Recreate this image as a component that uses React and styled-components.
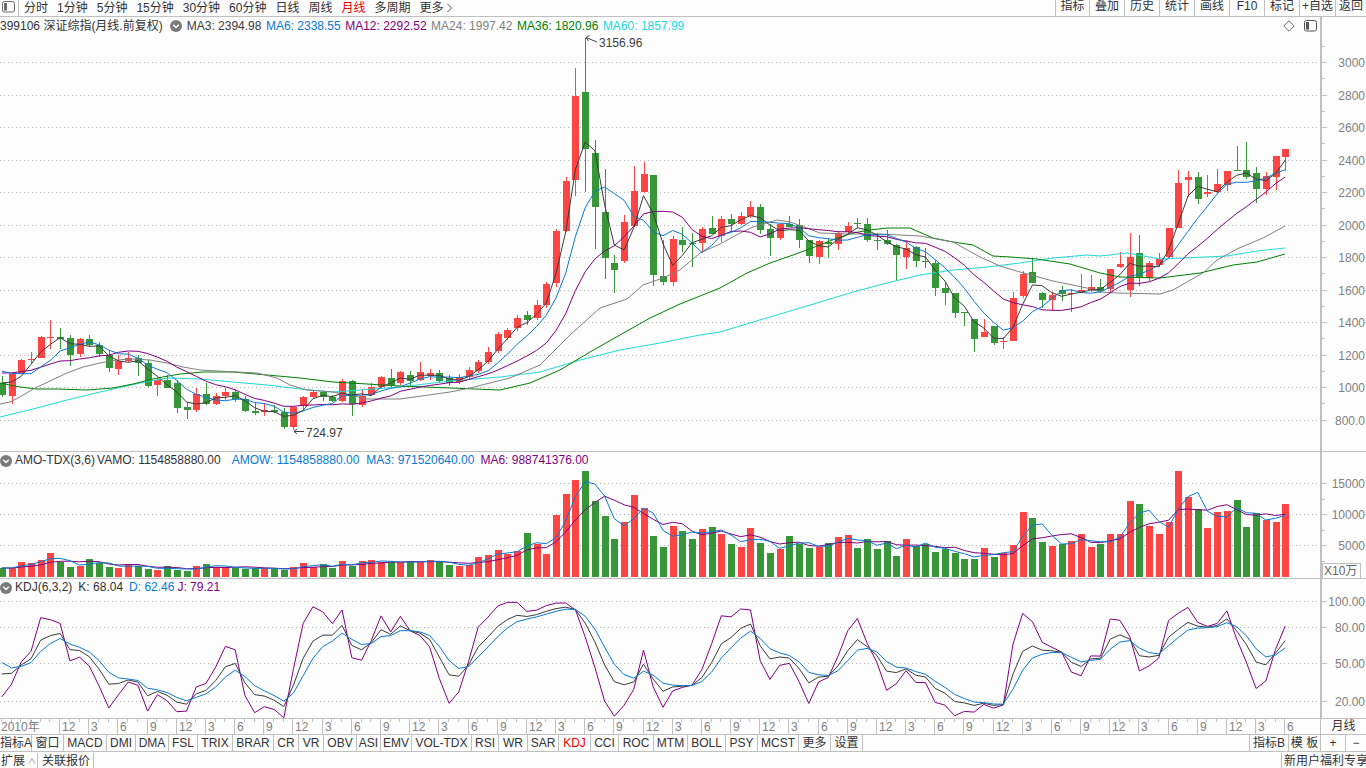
import React from 'react';
import styled, { createGlobalStyle } from 'styled-components';

const LINE = '#c0c0c0';
const INK = '#333333';
const RED = '#ff4444';
const GREEN = '#379637';
const MA = { ma3: '#3a3a3a', ma6: '#0a78d2', ma12: '#800080', ma24: '#808080', ma36: '#008000', ma60: '#20d8d8' };

const Global = createGlobalStyle`
  html, body { margin: 0; padding: 0; background: #fdfdfd; overflow: hidden; }
  body { font: 12px "Liberation Sans", "Noto Sans CJK SC", sans-serif; color: ${INK}; }
`;

const Page = styled.div`
  width: 1366px;
  height: 768px;
  display: flex;
  flex-direction: column;
  background: #fdfdfd;
  overflow: hidden;
`;

const Toolbar = styled.div`
  height: 16px;
  flex: none;
  display: flex;
  border-bottom: 1px solid ${LINE};
  line-height: 13px;
`;

const LayoutButton = styled.div`
  width: 19px;
  border-right: 1px solid ${LINE};
  padding: 1px 0 0 2px;
  box-sizing: border-box;
`;

const Periods = styled.div`
  display: flex;
  gap: 9px;
  padding-left: 5px;
`;

const Period = styled.span`
  display: flex;
  align-items: center;
  gap: 2px;
  white-space: nowrap;
  color: ${p => (p.$active ? '#f00000' : INK)};
`;

const ToolRight = styled.div`
  margin-left: auto;
  display: flex;
`;

const ToolButton = styled.div`
  width: ${p => p.$w}px;
  box-sizing: border-box;
  border-left: 1px solid ${LINE};
  text-align: center;
  white-space: nowrap;
  overflow: hidden;
`;

const Pane = styled.section`
  position: relative;
  flex: none;
  border-bottom: 1px solid ${LINE};
`;

const Legend = styled.div`
  width: 1320px;
  height: ${p => p.$h}px;
  line-height: ${p => p.$h}px;
  box-sizing: content-box;
  display: flex;
  align-items: center;
  gap: ${p => p.$gap}px;
  border-right: 2px solid ${LINE};
  white-space: nowrap;
`;

const Reading = styled.span`
  color: ${p => p.$color};
  margin-left: ${p => p.$before || 0}px;
  margin-right: ${p => p.$after || 0}px;
`;

const LegendTools = styled.div`
  margin-left: auto;
  display: flex;
  align-items: center;
  gap: 9px;
  padding-right: 3px;
`;

const Plot = styled.svg`
  display: block;
  font: 12px "Liberation Sans", "Noto Sans CJK SC", sans-serif;
`;

const UnitBadge = styled.div`
  position: absolute;
  left: 1322px;
  bottom: 0;
  width: 36px;
  height: 14px;
  line-height: 14px;
  padding-left: 1px;
  border: 1px solid ${LINE};
  border-bottom: 0;
  color: #666;
  white-space: nowrap;
`;

const AxisRow = styled.div`
  height: 15px;
  flex: none;
  display: flex;
  border-bottom: 1px solid ${LINE};
`;

const AxisUnit = styled.div`
  flex: 1;
  border-left: 1px solid ${LINE};
  text-align: center;
  line-height: 14px;
`;

const TabStrip = styled.div`
  height: 16px;
  flex: none;
  display: flex;
  line-height: 16px;
  border-bottom: 1px solid ${LINE};
`;

const Tab = styled.div`
  width: ${p => p.$w}px;
  box-sizing: border-box;
  border-right: 1px solid ${LINE};
  text-align: center;
  white-space: nowrap;
  color: ${p => (p.$active ? '#f00000' : INK)};
`;

const TabsRight = styled.div`
  margin-left: auto;
  display: flex;
`;

const SideTab = styled(Tab)`
  border-right: 0;
  border-left: 1px solid ${LINE};
`;

const StatusBar = styled.div`
  flex: 1;
  display: flex;
  line-height: 16px;
  padding-top: 1px;
  overflow: hidden;
`;

const StatusCell = styled.div`
  width: ${p => p.$w}px;
  box-sizing: border-box;
  display: flex;
  align-items: center;
  gap: 3px;
  padding-left: ${p => p.$pad}px;
  border-right: 1px solid ${LINE};
  white-space: nowrap;
`;

const Promo = styled.div`
  margin-left: auto;
  width: 82px;
  padding-left: 2px;
  border-left: 1px solid ${LINE};
  white-space: nowrap;
  overflow: hidden;
`;

/* Monthly candles in plot coordinates: body top, body bottom, high, low, up (1) or down (0). */
const CANDLES = [
  [383,395,376,397,0],[374,396,374,404,1],[360,373,359,374,1],[359,360,352,364,1],[337,358,336,358,1],
  [337,338,320,349,1],[337,339,328,349,0],[338,355,335,366,0],[339,354,338,357,1],[339,345,335,347,0],
  [345,354,342,357,0],[355,368,350,372,0],[361,369,355,375,1],[358,361,352,362,1],[358,363,355,376,0],
  [363,386,360,387,0],[380,385,378,396,1],[380,388,375,388,0],[383,408,380,413,0],[407,410,402,419,0],
  [394,410,388,412,1],[394,404,383,405,0],[396,404,393,405,1],[392,396,388,400,1],[392,399,390,402,0],
  [399,411,396,412,0],[411,413,402,415,0],[410,412,403,416,1],[410,412,405,413,0],[412,427,408,429,0],
  [407,427,406,430,1],[397,406,396,410,1],[392,397,390,398,1],[392,397,391,401,0],[397,401,395,402,0],
  [381,401,379,402,1],[381,404,380,416,0],[396,405,389,407,1],[387,395,383,396,1],[377,387,376,389,1],
  [378,385,369,388,0],[372,383,371,385,1],[375,381,371,385,0],[372,380,362,381,1],[373,376,369,380,1],
  [373,381,370,383,0],[378,383,375,386,0],[377,382,374,384,1],[370,377,367,380,1],[362,371,360,373,1],
  [352,362,347,364,1],[334,351,332,353,1],[330,338,328,340,1],[318,328,315,331,1],[315,320,311,325,0],
  [305,318,300,320,1],[284,305,282,308,1],[231,283,229,287,1],[181,231,177,232,1],[96,180,68,196,1],
  [92,149,38,192,0],[153,207,140,249,0],[212,258,169,279,0],[263,270,255,293,0],[222,261,215,263,1],
  [191,226,166,227,1],[174,192,162,193,1],[175,275,175,286,0],[276,282,240,285,0],[239,282,236,286,1],
  [240,245,227,252,0],[243,244,233,267,0],[229,243,227,253,1],[228,234,216,234,0],[219,236,216,242,1],
  [219,224,214,232,0],[216,224,212,225,1],[207,216,201,218,1],[207,230,204,234,0],[229,238,224,256,0],
  [224,238,223,240,1],[224,227,216,227,0],[225,240,219,248,0],[240,256,240,263,0],[241,257,240,264,1],
  [242,244,238,258,0],[233,244,232,250,1],[226,232,222,233,1],[223,224,218,228,0],[224,240,218,242,0],
  [240,241,233,250,0],[240,244,230,245,0],[245,255,244,280,0],[248,257,240,269,1],[247,261,246,267,0],
  [261,262,248,268,0],[263,288,260,296,0],[288,293,283,305,0],[293,313,293,318,0],[312,313,312,326,0],
  [319,339,319,352,0],[332,337,319,337,1],[326,343,326,345,0],[341,342,337,349,1],[298,341,292,341,1],
  [274,296,271,298,1],[272,283,258,283,0],[293,300,292,308,0],[295,300,292,311,1],[290,294,286,301,0],
  [293,294,289,312,1],[290,292,274,293,1],[287,290,275,292,1],[287,291,279,293,0],[269,289,269,293,1],
  [264,267,252,268,1],[257,290,233,297,1],[253,278,235,286,0],[263,278,261,281,1],[259,265,253,267,1],
  [228,257,228,258,1],[183,228,170,228,1],[177,180,171,197,1],[177,199,172,204,0],[192,194,175,197,1],
  [184,192,169,193,1],[171,185,171,191,1],[170,171,146,171,0],[170,177,142,179,0],[173,189,167,203,0],
  [176,189,172,195,1],[156,177,156,190,1],[149,157,149,171,1],
];

/* Top edge of each turnover bar. */
const VOLUME = [
  568,568,562,563,560,553,562,567,566,559,563,567,568,564,566,569,570,566,570,571,566,564,567,567,568,569,
  568,568,569,570,567,563,567,564,568,561,566,561,560,562,562,562,562,562,560,562,565,566,565,557,555,550,
  554,551,533,544,554,515,494,480,471,501,516,539,522,495,508,536,
  547,526,531,539,529,527,534,544,547,528,543,553,549,536,544,548,547,543,537,535,548,539,549,541,556,539,
  546,544,552,549,553,559,559,548,557,553,545,512,518,542,546,544,541,534,547,544,534,534,501,504,526,534,
  522,471,497,509,528,512,511,500,527,513,520,522,504,
];

const barX = i => 1.8 + 9.723 * i;
const closeOf = c => (c[4] ? c[0] : c[1]);

const movingAverage = (series, n, earlier = []) => {
  const all = [...earlier, ...series];
  return series.map((_, i) => {
    const end = i + earlier.length + 1;
    const win = all.slice(Math.max(0, end - n), end);
    return win.reduce((a, b) => a + b, 0) / win.length;
  });
};

const closes = CANDLES.map(closeOf);
const CLOSE_HISTORY = [375, 375, 375, 375, 375, 375, 359, 359, 359, 377, 377];
const toLine = values => values.map((y, i) => `${barX(i).toFixed(1)},${y.toFixed(1)}`).join(' ');
const ptsLine = pts => pts.map(p => p.join(',')).join(' ');

/* Long averages need more history than the plot shows, so they are stored as traced curves. */
const MA24_PTS = [[0,404],[10,402],[20,397],[33,389],[50,381],[67,373],[83,367],[100,363],[117,360],[133,359],[150,360],[167,363],[183,367],[200,370],[217,371],[237,372],[257,373],[277,378],[290,385],[307,390],[333,392],[350,395],[367,399],[400,399],[450,392],[470,388],[510,378],[540,365],[570,335],[600,308],[627,299],[643,285],[663,278],[680,270],[700,253],[720,244],[740,233],[753,227],[777,220],[790,222],[807,228],[820,233],[847,234],[880,234],[920,236],[953,242],[980,257],[1000,266],[1020,272],[1053,281],[1087,288],[1100,292],[1117,293],[1160,294],[1173,290],[1187,282],[1203,273],[1217,260],[1237,249],[1263,238],[1285,226]];
const MA36_PTS = [[0,383],[20,387],[37,389],[57,389],[87,390],[113,388],[133,384],[157,378],[180,374],[203,372],[233,372],[267,375],[300,378],[333,382],[367,384],[400,386],[450,388],[500,390],[530,383],[560,370],[590,352],[620,335],[650,318],[680,304],[720,288],[747,273],[770,263],[793,255],[820,245],[837,238],[853,233],[870,230],[887,228],[910,228],[933,238],[953,242],[973,245],[993,256],[1010,257],[1037,259],[1070,264],[1100,273],[1120,277],[1160,278],[1200,273],[1233,265],[1257,262],[1285,254]];
const MA60_PTS = [[0,417],[33,409],[67,400],[100,392],[140,383],[167,378],[200,379],[233,382],[267,385],[300,389],[333,392],[400,387],[450,381],[500,377],[540,372],[580,360],[620,350],[660,343],[700,335],[720,332],[753,322],[787,312],[820,302],[853,292],[887,283],[920,275],[953,270],[987,267],[1020,263],[1053,258],[1087,255],[1100,256],[1127,253],[1160,259],[1183,258],[1227,256],[1257,251],[1285,248]];

/* KDJ(6,3,2) taken from the candles; the first bars also see the range of the months before them. */
const kdjSeries = () => {
  let k = 55;
  let d = 60;
  const K = [], D = [], J = [];
  CANDLES.forEach((c, i) => {
    const win = CANDLES.slice(Math.max(0, i - 5), i + 1);
    const hi = Math.min(...win.map(w => w[2]), i < 4 ? 332 : Infinity);
    const lo = Math.max(...win.map(w => w[3]), i < 4 ? 406 : -Infinity);
    const rsv = lo === hi ? 50 : ((lo - closeOf(c)) / (lo - hi)) * 100;
    k = (2 * k + rsv) / 3;
    d = (d + k) / 2;
    K.push(k); D.push(d); J.push(3 * k - 2 * d);
  });
  return { K, D, J };
};
const kdjY = v => 701 - (v - 20) * 1.25;
const KDJ = kdjSeries();

const Chevron = () => (
  <svg width="12" height="12" viewBox="0 0 13 13" style={{ flex: 'none' }}>
    <circle cx="6.5" cy="6.5" r="6.5" fill="#7a7a7a" />
    <path d="M3.5 5.2 L6.5 8.2 L9.5 5.2" fill="none" stroke="#fff" strokeWidth="1.6" />
  </svg>
);

const PanelIcon = ({ stroke = '#6a6a6a' }) => (
  <svg width="13" height="12" viewBox="0 0 13 12" style={{ display: 'block' }}>
    <rect x="0.5" y="0.5" width="12" height="10.5" rx="2" fill="none" stroke={stroke} />
    <rect x="2" y="2" width="3" height="7.5" fill={stroke} />
  </svg>
);

const Diamond = () => (
  <svg width="12" height="12" viewBox="0 0 12 12" style={{ display: 'block' }}>
    <path d="M6 0.8 L11.2 6 L6 11.2 L0.8 6 Z" fill="none" stroke="#6a6a6a" />
  </svg>
);

const Grid = ({ rows }) =>
  rows.map(y => (
    <line key={y} x1="0" x2="1320" y1={y + 0.5} y2={y + 0.5} stroke="#b4b4b4" strokeDasharray="1 3" shapeRendering="crispEdges" />
  ));

const AxisLine = ({ top, bottom }) => (
  <rect x="1320" y={top} width="2" height={bottom - top} fill={LINE} shapeRendering="crispEdges" />
);

const AxisLabels = ({ marks, minor = [] }) => (
  <g shapeRendering="crispEdges">
    {marks.map(([y, text]) => (
      <g key={text}>
        <line x1="1322" x2="1327" y1={y + 0.5} y2={y + 0.5} stroke={LINE} />
        <text x="1365" y={y + 4.5} textAnchor="end" fill="#808080">{text}</text>
      </g>
    ))}
    {minor.map(y => (
      <line key={y} x1="1322" x2="1325" y1={y + 0.5} y2={y + 0.5} stroke={LINE} />
    ))}
  </g>
);

const Candle = ({ c, i }) => {
  const x = Math.round(barX(i));
  const color = c[4] ? RED : GREEN;
  return (
    <g shapeRendering="crispEdges">
      <rect x={x} y={c[2]} width="1" height={c[3] - c[2]} fill={color} />
      <rect x={x - 3} y={c[0]} width="7" height={Math.max(1, c[1] - c[0])} fill={color} />
    </g>
  );
};

const PRICE_MARKS = [[62,'3000'],[95,'2800'],[127,'2600'],[160,'2400'],[192,'2200'],[225,'2000'],[257,'1800'],[290,'1600'],[322,'1400'],[355,'1200'],[387,'1000'],[420,'800.0']];
const PRICE_MINOR = PRICE_MARKS.slice(0, -1).map(([y]) => y + 16);

const PriceChart = () => (
  <Plot width="1366" height="416" viewBox="0 35 1366 416">
    <Grid rows={PRICE_MARKS.map(m => m[0])} />
    <AxisLine top={35} bottom={451} />
    <AxisLabels marks={PRICE_MARKS} minor={[46, ...PRICE_MINOR]} />
    {CANDLES.map((c, i) => <Candle key={i} c={c} i={i} />)}
    <g fill="none" strokeWidth="1">
      <polyline points={ptsLine(MA60_PTS)} stroke={MA.ma60} />
      <polyline points={ptsLine(MA36_PTS)} stroke={MA.ma36} />
      <polyline points={ptsLine(MA24_PTS)} stroke={MA.ma24} />
      <polyline points={toLine(movingAverage(closes, 12, CLOSE_HISTORY))} stroke={MA.ma12} />
      <polyline points={toLine(movingAverage(closes, 6, CLOSE_HISTORY))} stroke={MA.ma6} />
      <polyline points={toLine(movingAverage(closes, 3, CLOSE_HISTORY))} stroke={MA.ma3} />
    </g>
    <path d="M597 42 L586 37.5 M586 37.5 L589.5 35.5 M586 37.5 L588.5 41" fill="none" stroke="#444" />
    <text x="599" y="47" fill="#3c3c3c">3156.96</text>
    <path d="M304 431.5 L294 431.5 M294 431.5 L297 429 M294 431.5 L297 434" fill="none" stroke="#444" />
    <text x="306" y="437" fill="#3c3c3c">724.97</text>
  </Plot>
);

const VOLUME_MARKS = [[483,'15000'],[514,'10000'],[545,'5000']];

const VolumeChart = () => {
  const history = [568, 568, 568, 568, 568];
  return (
    <Plot width="1366" height="109" viewBox="0 469 1366 109">
      <Grid rows={VOLUME_MARKS.map(m => m[0])} />
      <AxisLine top={469} bottom={578} />
      <AxisLabels marks={VOLUME_MARKS} minor={[499, 530, 561]} />
      <g shapeRendering="crispEdges">
        {VOLUME.map((top, i) => (
          <rect key={i} x={Math.round(barX(i)) - 3} y={top} width="7" height={577 - top} fill={CANDLES[i][4] ? RED : GREEN} />
        ))}
      </g>
      <g fill="none" strokeWidth="1">
        <polyline points={toLine(movingAverage(VOLUME, 6, history))} stroke={MA.ma12} />
        <polyline points={toLine(movingAverage(VOLUME, 3, history))} stroke={MA.ma6} />
      </g>
    </Plot>
  );
};

const KDJ_MARKS = [[601,'100.00'],[627,'80.00'],[663,'50.00'],[701,'20.00']];

const KdjChart = () => (
  <Plot width="1366" height="122" viewBox="0 596 1366 122">
    <Grid rows={KDJ_MARKS.map(m => m[0])} />
    <AxisLine top={596} bottom={718} />
    <AxisLabels marks={KDJ_MARKS} />
    <g fill="none" strokeWidth="1">
      <polyline points={toLine(KDJ.J.map(kdjY))} stroke={MA.ma12} />
      <polyline points={toLine(KDJ.K.map(kdjY))} stroke={MA.ma3} />
      <polyline points={toLine(KDJ.D.map(kdjY))} stroke={MA.ma6} />
    </g>
  </Plot>
);

const MONTHS = ['12', '3', '6', '9'];

const TimeAxis = () => (
  <Plot width="1320" height="15" viewBox="0 719 1320 15">
    <text x="1" y="731" fill="#808080">2010年</text>
    <g shapeRendering="crispEdges" stroke={LINE}>
      {CANDLES.map((_, i) => (
        <line key={i} x1={Math.round(barX(i)) - 0.5} x2={Math.round(barX(i)) - 0.5} y1="719" y2="722" />
      ))}
    </g>
    {CANDLES.map((_, i) =>
      i >= 6 && (i - 6) % 3 === 0 ? (
        <g key={i}>
          <line x1={Math.round(barX(i)) - 0.5} x2={Math.round(barX(i)) - 0.5} y1="719" y2="734" stroke={LINE} shapeRendering="crispEdges" />
          <text x={Math.round(barX(i)) + 2} y="731" fill="#808080">{MONTHS[((i - 6) / 3) % 4]}</text>
        </g>
      ) : null
    )}
  </Plot>
);

const PERIODS = ['分时', '1分钟', '5分钟', '15分钟', '30分钟', '60分钟', '日线', '周线', '月线', '多周期'];
const TOOLS = [['指标', 34], ['叠加', 35], ['历史', 35], ['统计', 35], ['画线', 35], ['F10', 35], ['标记', 35], ['+自选', 36], ['返回', 31]];
const TABS = [['指标A', 32], ['窗口', 32], ['MACD', 43], ['DMI', 29], ['DMA', 33], ['FSL', 29], ['TRIX', 35], ['BRAR', 41], ['CR', 25], ['VR', 25], ['OBV', 33], ['ASI', 24], ['EMV', 31], ['VOL-TDX', 60], ['RSI', 27], ['WR', 29], ['SAR', 31], ['KDJ', 32], ['CCI', 28], ['ROC', 35], ['MTM', 34], ['BOLL', 38], ['PSY', 32], ['MCST', 41], ['更多', 32], ['设置', 32]];

export default function App() {
  return (
    <Page>
      <Global />
      <Toolbar>
        <LayoutButton><PanelIcon /></LayoutButton>
        <Periods>
          {PERIODS.map(p => <Period key={p} $active={p === '月线'}>{p}</Period>)}
          <Period>
            更多
            <svg width="7" height="10" viewBox="0 0 7 10"><path d="M1.5 1 L5.5 5 L1.5 9" fill="none" stroke="#555" /></svg>
          </Period>
        </Periods>
        <ToolRight>
          {TOOLS.map(([t, w]) => <ToolButton key={t} $w={w}>{t}</ToolButton>)}
        </ToolRight>
      </Toolbar>

      <Pane>
        <Legend $h={18} $gap={4.5}>
          <Reading $color={INK} $after={3}>399106 深证综指(月线.前复权)</Reading>
          <Chevron />
          <Reading $color={MA.ma3}>MA3: 2394.98</Reading>
          <Reading $color={MA.ma6}>MA6: 2338.55</Reading>
          <Reading $color={MA.ma12}>MA12: 2292.52</Reading>
          <Reading $color={MA.ma24}>MA24: 1997.42</Reading>
          <Reading $color={MA.ma36}>MA36: 1820.96</Reading>
          <Reading $color={MA.ma60}>MA60: 1857.99</Reading>
          <LegendTools><Diamond /><PanelIcon stroke="#555" /></LegendTools>
        </Legend>
        <PriceChart />
      </Pane>

      <Pane>
        <Legend $h={17} $gap={2}>
          <Chevron />
          <Reading $color={INK} $before={1}>AMO-TDX(3,6)</Reading>
          <Reading $color={INK} $after={9}>VAMO: 1154858880.00</Reading>
          <Reading $color={MA.ma6} $after={5}>AMOW: 1154858880.00</Reading>
          <Reading $color={MA.ma6} $after={4}>MA3: 971520640.00</Reading>
          <Reading $color={MA.ma12}>MA6: 988741376.00</Reading>
        </Legend>
        <VolumeChart />
        <UnitBadge>X10万</UnitBadge>
      </Pane>

      <Pane>
        <Legend $h={17} $gap={2}>
          <Chevron />
          <Reading $color={INK} $before={1} $after={4}>KDJ(6,3,2)</Reading>
          <Reading $color={INK} $after={4}>K: 68.04</Reading>
          <Reading $color={MA.ma6} $after={1}>D: 62.46</Reading>
          <Reading $color={MA.ma12}>J: 79.21</Reading>
        </Legend>
        <KdjChart />
      </Pane>

      <AxisRow>
        <TimeAxis />
        <AxisUnit>月线</AxisUnit>
      </AxisRow>

      <TabStrip>
        {TABS.map(([t, w]) => <Tab key={t} $w={w} $active={t === 'KDJ'}>{t}</Tab>)}
        <TabsRight>
          <SideTab $w={39}>指标B</SideTab>
          <SideTab $w={32}>模 板</SideTab>
          <SideTab $w={25}>+</SideTab>
          <SideTab $w={21}>−</SideTab>
        </TabsRight>
      </TabStrip>

      <StatusBar>
        <StatusCell $w={38} $pad={1}>
          扩展
          <svg width="8" height="8" viewBox="0 0 8 8"><path d="M1 6.5 L4 1.5 L7 6.5" fill="none" stroke="#aaa" /></svg>
        </StatusCell>
        <StatusCell $w={56} $pad={4}>关联报价</StatusCell>
        <Promo>新用户福利专享</Promo>
      </StatusBar>
    </Page>
  );
}
